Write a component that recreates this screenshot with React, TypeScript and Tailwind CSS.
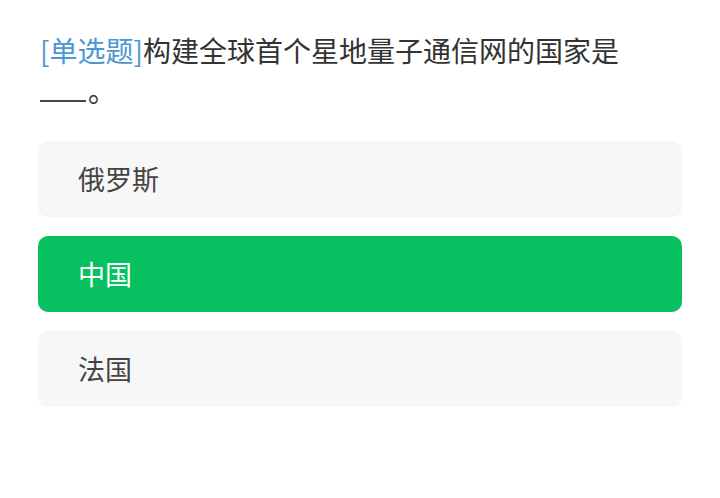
const OPTIONS = [
  { label: "俄罗斯", selected: false },
  { label: "中国", selected: true },
  { label: "法国", selected: false },
];

export default function App() {
  return (
    <div
      className="w-[720px] h-[498px] bg-white overflow-hidden"
      style={{ fontFamily: '"Noto Sans CJK SC", "Noto Sans", sans-serif' }}
    >
      <div className="px-[38px] pt-[30px]">
        <p className="text-[28px] leading-[40px] text-[#333333] pl-[2px] pr-[40px]">
          <span className="text-[#4a97d2]">[单选题]</span>构建全球首个星地量子通信网的国家是
          <span className="inline-block w-[46px] h-[2px] bg-[#444444] mr-[2px]" />。
        </p>
        <div className="mt-[31px] flex flex-col gap-[19px]">
          {OPTIONS.map((o) => (
            <div
              key={o.label}
              className={
                o.selected
                  ? "h-[76px] rounded-[10px] bg-[#07c160] text-white flex items-center px-[40px] text-[27px]"
                  : "h-[76px] rounded-[10px] bg-[#f7f7f7] text-[#444444] flex items-center px-[40px] text-[27px]"
              }
            >
              {o.label}
            </div>
          ))}
        </div>
      </div>
    </div>
  );
}
